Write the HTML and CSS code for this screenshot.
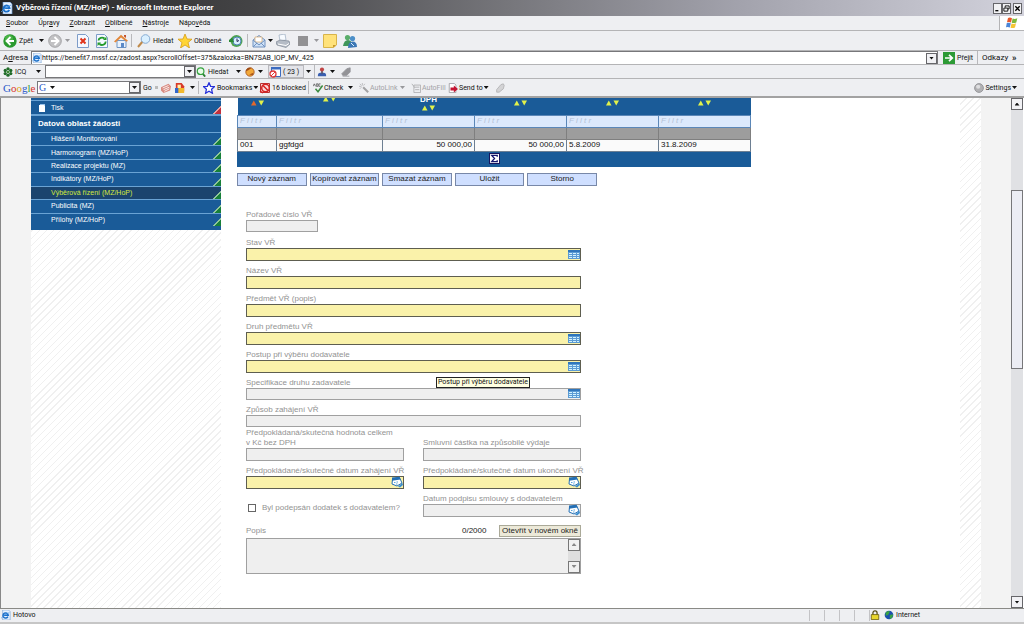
FILE: index.html
```html
<!DOCTYPE html>
<html lang="cs">
<head>
<meta charset="utf-8">
<title>Výběrová řízení (MZ/HoP)</title>
<link rel="stylesheet" href="styles.css">
</head>
<body>
<svg class="defs" aria-hidden="true">
  <symbol id="ie" viewBox="0 0 12 12"><path d="M2 0h7l2 2v10H2z" fill="#e8f2ff" stroke="#6b9bd2" stroke-width=".7"/><path d="M8.3 8a3.1 3.1 0 1 1 .3-1.8H3" fill="none" stroke="#1b6fc8" stroke-width="1.8"/><path d="M0 10Q3 6 10 3" fill="none" stroke="#4b9be8" stroke-width=".8"/></symbol>
  <symbol id="grid" viewBox="0 0 12 9"><path d="M0 0h12v9H0z" fill="#5b9bd4"/><path d="M0 0h12v2H0z" fill="#2f76bc"/><path d="M1 3h3v1H1zM5 3h3v1H5zM9 3h2v1H9zM1 5h3v1H1zM5 5h3v1H5zM9 5h2v1H9zM1 7h3v1H1zM5 7h3v1H5zM9 7h2v1H9z" fill="#d2f2ff"/></symbol>
  <symbol id="cal" viewBox="0 0 12 12"><path d="M1.500 3l7-1.500 2.500 5.500-5 3-5-2z" fill="#fff" stroke="#2672b8"/><path d="M1 1.500l7.500-.8 1 2.800-8.500 1.200z" fill="#236fb5"/><path d="M3 6.500h1.500M5.500 6H7M5 8h1.500" stroke="#5ba5dc"/><path d="M7 10.500L11.500 7l.5 2-3 2.500z" fill="#3d8fd0"/></symbol>
  <symbol id="sort" viewBox="0 0 13 6"><path d="M0 5.5L2.8.5l2.7 5z" class="up"/><path d="M7.500.5H13l-2.800 5z" fill="#e2f24a"/></symbol>
</svg>
<div class="window">
  <header class="titlebar">
    <svg class="i12"><use href="#ie"/></svg>
    <h1>Výběrová řízení (MZ/HoP) - Microsoft Internet Explorer</h1>
    <div class="winbtns">
      <button aria-label="Minimalizovat"><svg viewBox="0 0 8 8"><path d="M1.500 6.500h3.500" stroke="#000" stroke-width="1.500"/></svg></button>
      <button aria-label="Obnovit"><svg viewBox="0 0 8 8"><path d="M2.500 3V1h4.500v3.500H5.500M1 3.500h4.500v3.500H1z" fill="none" stroke="#000"/></svg></button>
      <button class="close" aria-label="Zavřít"><svg viewBox="0 0 8 8"><path d="M1.500 1.500l5 5m0-5l-5 5" stroke="#000" stroke-width="1.500"/></svg></button>
    </div>
  </header>

  <nav class="bar menu">
    <button><u>S</u>oubor</button><button>Úpr<u>a</u>vy</button><button><u>Z</u>obrazit</button><button><u>O</u>blíbené</button><button><u>N</u>ástroje</button><button>Nápo<u>v</u>ěda</button>
    <span class="flag"><svg viewBox="0 0 12 12"><path d="M2 1q2-1 4 .3L5 5.500Q3 4.500 1 5.300z" fill="#e8572a"/><path d="M6.600 1.600Q9 2.500 11.300 1.300L10.300 5.500Q8 6.500 5.700 5.800z" fill="#7db83c"/><path d="M.8 6Q3 5.200 4.800 6.300L3.800 10.500Q2 9.500 0 10.300z" fill="#4a86d8"/><path d="M5.500 6.600Q8 7.400 10 6.300L9 10.600Q7 11.500 4.500 10.800z" fill="#f5c433"/></svg></span>
  </nav>

  <div class="bar tools">
    <button><svg class="i14" viewBox="0 0 14 14"><circle cx="7" cy="7" r="6.700" fill="#2b9a2f"/><circle cx="6" cy="5" r="4" fill="#5cc455" opacity=".6"/><path d="M7.500 3L3.500 7l4 4M4 7h7" fill="none" stroke="#fff" stroke-width="1.800"/></svg>Zpět</button>
    <i class="caret"></i>
    <button aria-label="Vpřed"><svg class="i14" viewBox="0 0 14 14"><circle cx="7" cy="7" r="6.300" fill="#c2c2c4" stroke="#a5a5a8"/><path d="M6.500 3l4 4-4 4M10 7H3" fill="none" stroke="#fff" stroke-width="1.800"/></svg></button>
    <i class="caret off"></i>
    <button aria-label="Zastavit"><svg class="i14" viewBox="0 0 14 14"><path d="M1.500.500h8l3 3v10h-11z" fill="#f4f8ff" stroke="#7d9cc8"/><path d="M4.500 4.500l5 5m0-5l-5 5" stroke="#e0341b" stroke-width="2"/></svg></button>
    <button aria-label="Obnovit stránku"><svg class="i14" viewBox="0 0 14 14"><path d="M1.500.500h8l3 3v10h-11z" fill="#f4f8ff" stroke="#7d9cc8"/><path d="M3.500 6.500a3.500 3 0 0 1 6-2M10.500 7.500a3.500 3 0 0 1-6 2.500" fill="none" stroke="#239a2b" stroke-width="1.800"/><path d="M8 6l3.500 0V2.500zM6 8.500H2.500V12z" fill="#239a2b"/></svg></button>
    <button aria-label="Domů"><svg class="i14" viewBox="0 0 14 14"><path d="M3 6.500h9v7H3z" fill="#eaf2fc" stroke="#6f95c4"/><path d="M0 7.500L7 .8l7 6-1.500 1L7 3.500 1.500 8.500z" fill="#e2873a"/><path d="M10 1h2v3l-2-1.500z" fill="#c4502a"/><path d="M7 9h3v4.500H7z" fill="#5a89c8"/></svg></button>
    <i class="sep"></i>
    <button><svg class="i14" viewBox="0 0 14 14"><path d="M1 13l5-6" stroke="#c08a4a" stroke-width="2"/><circle cx="8.500" cy="5" r="4.300" fill="#d9efff" stroke="#86abd3"/></svg>Hledat</button>
    <button><svg class="i14" viewBox="0 0 14 14"><path d="M7 0l2 5 5 .2-4 3.400L11.500 14 7 11l-4.500 3L4 8.600 0 5.200 5 5z" fill="#ffd536" stroke="#d79c16" stroke-width=".8"/></svg>Oblíbené</button>
    <button aria-label="Historie"><svg class="i14" viewBox="0 0 14 14"><circle cx="7.500" cy="7" r="6" fill="#4ea452"/><circle cx="8" cy="7" r="4" fill="#d8effc" stroke="#4c82b8"/><path d="M8 4.500V7.500l2-1" fill="none" stroke="#225"/><path d="M0 6l3-2.500L5 8H0z" fill="#2b8a36"/></svg></button>
    <i class="sep"></i>
    <button aria-label="Pošta"><svg class="i14" viewBox="0 0 14 14"><path d="M1 6l6-4.500L13 6v7H1z" fill="#cfe2f8" stroke="#7192c0"/><path d="M3 3h7v5H3z" fill="#fff" stroke="#d4a86a" stroke-width=".7"/><path d="M1 6l6 5 6-5M1 13l4-4M13 13L9 9" fill="none" stroke="#7192c0"/></svg></button>
    <i class="caret"></i>
    <button aria-label="Tisk"><svg class="i14" viewBox="0 0 14 14"><path d="M4 7L3 1l6-1 1 6z" fill="#f7fbff" stroke="#9aaabf" stroke-width=".7"/><path d="M0 8l4-2 9 1 1 3-4 3.500L1 11z" fill="#b5bcc6" stroke="#7d8693" stroke-width=".7"/><path d="M2 10l8 1.500 3-2" stroke="#fff" fill="none"/></svg></button>
    <button aria-label="Upravit" disabled><svg class="i14" viewBox="0 0 14 14"><path d="M1 2h10v10H1z" fill="#929294"/></svg></button>
    <i class="caret off"></i>
    <button aria-label="Poznámka"><svg class="i14" viewBox="0 0 14 14"><path d="M.5.500h13V11l-3 2.500H.5z" fill="#ffe27a" stroke="#d8b44a"/><path d="M13 11h-3v2.500z" fill="#c99a2b"/></svg></button>
    <button aria-label="Messenger"><svg class="i14" viewBox="0 0 14 14"><circle cx="4.500" cy="3.500" r="2.600" fill="#59ad6a"/><path d="M0 12q1-6 5-6t4 6z" fill="#3f965a"/><circle cx="9.500" cy="4.500" r="2.600" fill="#4c8fc8"/><path d="M5 14q0-6.500 4.500-6.500T14 13z" fill="#3c77b5"/><path d="M8 9l3 3" stroke="#d8f0ff"/></svg></button>
  </div>

  <div class="bar address">
    <label for="url">A<u>d</u>resa</label>
    <div class="combo"><svg class="i10"><use href="#ie"/></svg><input id="url" value="https://benefit7.mssf.cz/zadost.aspx?scrollOffset=375&amp;zalozka=BN7SAB_IOP_MV_425"><button class="drop" aria-label="Rozbalit"><i class="caret"></i></button></div>
    <button class="go"><svg class="i12" viewBox="0 0 12 12"><path d="M0 0h12v12H0z" fill="#2c9a35"/><path d="M2 6h7M6 2.800L9.300 6 6 9.200" fill="none" stroke="#fff" stroke-width="1.700"/></svg>Přejít</button>
    <i class="sep"></i>
    <button class="big">Odkazy</button><b class="more">»</b>
  </div>

  <div class="bar icq">
    <button><svg class="i10" viewBox="0 0 12 12"><g fill="#1f6b28"><circle cx="6" cy="2.200" r="2"/><circle cx="9.300" cy="4.200" r="2"/><circle cx="9.300" cy="7.900" r="2"/><circle cx="6" cy="9.800" r="2"/><circle cx="2.700" cy="7.900" r="2"/><circle cx="2.700" cy="4.200" r="2"/></g><circle cx="6" cy="6" r="1.500" fill="#3c8a32"/></svg>ICQ</button>
    <i class="caret"></i>
    <div class="combo"><input aria-label="Hledat na ICQ"><button class="drop" aria-label="Rozbalit hledání"><i class="caret"></i></button></div>
    <button><svg class="i10" viewBox="0 0 12 12"><path d="M8 8l3 3.500" stroke="#2b7d33" stroke-width="2.200"/><circle cx="5.500" cy="5" r="4" fill="#e8fbe8" stroke="#35a23e" stroke-width="1.400"/></svg>Hledat</button>
    <i class="caret"></i>
    <button aria-label="Smajlík"><svg class="i10" viewBox="0 0 12 12"><circle cx="6" cy="6" r="5" fill="#f2a93a" stroke="#a8541c"/><path d="M1 5q1-5 7-4L4 4z" fill="#9c4a18"/><path d="M5 9l5-2v3z" fill="#a8541c"/></svg></button>
    <i class="caret"></i>
    <button class="count"><svg class="i12" viewBox="0 0 12 12"><path d="M2.500 1.500h9v9h-9z" fill="#fff" stroke="#3c6cc0"/><path d="M2 1h10v2.500H2z" fill="#3c6cc0"/><circle cx="4" cy="8" r="3" fill="#fff" stroke="#e03838" stroke-width="1.300"/><path d="M2 10l4-4" stroke="#e03838"/></svg>( 23 )</button>
    <i class="caret"></i>
    <i class="sep"></i>
    <button aria-label="Uživatel"><svg class="i10" viewBox="0 0 12 12"><path d="M1 11q0-4 3-4h4q3 0 3 4z" fill="#3a5fb0"/><path d="M5 4h2v4H5z" fill="#556"/><circle cx="6" cy="3" r="2.500" fill="#c04444"/></svg></button>
    <i class="caret"></i>
    <button aria-label="Zvýraznit" disabled><svg class="i10" viewBox="0 0 12 12"><path d="M1 8l6-6 4-1v5l-4 4H2zM2 11h8" fill="#939397" stroke="#939397"/></svg></button>
  </div>

  <div class="bar google">
    <a href="#" class="glogo"><b class="b">G</b><b class="r">o</b><b class="y">o</b><b class="b">g</b><b class="g">l</b><b class="r">e</b></a>
    <div class="combo"><span class="gmark">G</span><i class="caret"></i><input aria-label="Hledat na Google"><button class="drop" aria-label="Rozbalit historii"><i class="caret"></i></button></div>
    <button>Go</button>
    <i class="grip"></i>
    <button aria-label="Zprávy"><svg class="i10" viewBox="0 0 12 12"><path d="M0 5l9-4 3 3-1 5-8 3-3-3z" fill="#d98a80"/><path d="M2 6l7-3M3 8l7-3M4 10l6-3" stroke="#fff"/></svg></button>
    <button aria-label="Galerie"><svg class="i10" viewBox="0 0 12 12"><path d="M1 0h7l3 4v6H1z" fill="#d83a2b"/><path d="M0 6h5v6H0z" fill="#3166cc"/><path d="M4 6h7v6H4z" fill="#f3b92c"/><path d="M3 2h4v4H3z" fill="#fff1b0"/></svg></button>
    <i class="caret"></i>
    <i class="sep"></i>
    <button aria-label="Přidat záložku"><svg class="i12" viewBox="0 0 12 12"><path d="M6 .8l1.600 3.500 3.900.4-2.900 2.600.8 3.900L6 9.200l-3.400 2 .8-3.900L.5 4.700l3.900-.4z" fill="#fff" stroke="#2530d8" stroke-width="1.300"/></svg></button>
    <button>Bookmarks<i class="caret"></i></button>
    <button><svg class="i12" viewBox="0 0 12 12"><path d="M1.500 1.500h9v9h-9z" fill="#fbdada" stroke="#b83232"/><circle cx="6.500" cy="6" r="3.800" fill="none" stroke="#d62323" stroke-width="1.500"/><path d="M4 3.500l5 5M1 9l3 2" stroke="#d62323" stroke-width="1.500"/></svg>16 blocked</button>
    <i class="sep"></i>
    <button><svg class="i10" viewBox="0 0 12 12"><path d="M3 7l3 3.500L11.500 3" fill="none" stroke="#3a8a3f" stroke-width="1.800"/><path d="M0 4l1.500-3L3 4M4 1v3h2V1zM9 1H7v3h2" fill="none" stroke="#444" stroke-width=".8"/></svg>Check</button>
    <i class="caret"></i>
    <button disabled><svg class="i10" viewBox="0 0 12 12"><path d="M5 5l6 6" stroke="#a2a2a4" stroke-width="2.500"/><path d="M4 0v3M0 4h3M1 1l2 2M7 1L5.500 3M1 7l2-2" stroke="#b5b5b8"/></svg>AutoLink</button>
    <i class="caret off"></i>
    <button disabled><svg class="i10" viewBox="0 0 12 12"><path d="M3.500 2.500h8v9h-8zM5 5h5M5 8h5M1 1l4 5" fill="none" stroke="#ababad"/></svg>AutoFill</button>
    <button><svg class="i10" viewBox="0 0 12 12"><path d="M1.500.500h6l2 2v9h-8z" fill="#fff" stroke="#9a9aa0"/><path d="M3 5.500h4V3l5 4.300-5 4.200V9H3z" fill="#c41432"/></svg>Send to<i class="caret"></i></button>
    <button aria-label="Zvýrazňovač" disabled><svg class="i10" viewBox="0 0 12 12"><path d="M2 8l5-6 3-1 1 2-1 4-5 4H2z" fill="#d3d3d5" stroke="#b0b0b2"/></svg></button>
    <button class="settings"><svg class="i10" viewBox="0 0 12 12"><circle cx="6" cy="6" r="5.300" fill="#b1b1b4" stroke="#8e8e91"/><circle cx="5" cy="4.500" r="2.500" fill="#dedee0"/></svg>Settings<i class="caret"></i></button>
  </div>

  <div class="viewport">
    <div class="gutter"></div>
    <aside class="side hatch">
      <nav class="tree">
        <a href="#" class="print"><svg class="i8" viewBox="0 0 8 8"><path d="M2 0h5v6H2z" fill="#9cc4ea"/><path d="M1 1h5l1 1v6H1z" fill="#fff"/></svg>Tisk</a>
        <h2>Datová oblast žádosti</h2>
        <ul>
          <li><a href="#">Hlášení Monitorování</a></li>
          <li><a href="#">Harmonogram (MZ/HoP)</a></li>
          <li><a href="#">Realizace projektu (MZ)</a></li>
          <li><a href="#">Indikátory (MZ/HoP)</a></li>
          <li><a href="#" class="current">Výběrová řízení (MZ/HoP)</a></li>
          <li><a href="#">Publicita (MZ)</a></li>
          <li><a href="#">Přílohy (MZ/HoP)</a></li>
        </ul>
      </nav>
    </aside>
    <main>
      <table>
        <colgroup><col class="c-no"><col class="c-name"><col class="c-val"><col class="c-val"><col class="c-val"><col class="c-val"></colgroup>
        <thead>
          <tr>
            <th class="mid"><svg class="sort hot"><use href="#sort"/></svg></th>
            <th class="top"><svg class="sort"><use href="#sort"/></svg></th>
            <th class="low">DPH<svg class="sort"><use href="#sort"/></svg></th>
            <th class="mid"><svg class="sort"><use href="#sort"/></svg></th>
            <th class="mid"><svg class="sort"><use href="#sort"/></svg></th>
            <th class="mid"><svg class="sort"><use href="#sort"/></svg></th>
          </tr>
          <tr class="filter">
            <td><input aria-label="Filtr číslo" placeholder="F i l t r"></td><td><input aria-label="Filtr název" placeholder="F i l t r"></td><td><input aria-label="Filtr bez DPH" placeholder="F i l t r"></td><td><input aria-label="Filtr částka" placeholder="F i l t r"></td><td><input aria-label="Filtr od" placeholder="F i l t r"></td><td><input aria-label="Filtr do" placeholder="F i l t r"></td>
          </tr>
        </thead>
        <tbody>
          <tr class="blank"><td></td><td></td><td></td><td></td><td></td><td></td></tr>
          <tr class="data"><td>001</td><td>ggfdgd</td><td class="num">50 000,00</td><td class="num">50 000,00</td><td>5.8.2009</td><td>31.8.2009</td></tr>
        </tbody>
        <tfoot><tr><td colspan="6"><button class="sum" aria-label="Součet"><svg viewBox="0 0 10 10"><path d="M8 3V1.500H2L5 5 2 8.500h6V7" fill="none" stroke="#14146e" stroke-width="1.500"/></svg></button></td></tr></tfoot>
      </table>

      <div class="actions"><button>Nový záznam</button><button>Kopírovat záznam</button><button>Smazat záznam</button><button>Uložit</button><button>Storno</button></div>

      <form>
        <div class="fields">
          <div class="field short"><label for="f1">Pořadové číslo VŘ</label><div class="box"><input id="f1"></div></div>
          <div class="field"><label for="f2">Stav VŘ</label><div class="box req"><input id="f2"><svg class="pick"><use href="#grid"/></svg></div></div>
          <div class="field"><label for="f3">Název VŘ</label><div class="box req"><input id="f3"></div></div>
          <div class="field"><label for="f4">Předmět VŘ (popis)</label><div class="box req"><input id="f4"></div></div>
          <div class="field"><label for="f5">Druh předmětu VŘ</label><div class="box req"><input id="f5"><svg class="pick"><use href="#grid"/></svg></div></div>
          <div class="field"><label for="f6">Postup při výběru dodavatele</label><div class="box req"><input id="f6"><svg class="pick"><use href="#grid"/></svg></div><span class="tip" role="tooltip">Postup při výběru dodavatele</span></div>
          <div class="field"><label for="f7">Specifikace druhu zadavatele</label><div class="box"><input id="f7"><svg class="pick"><use href="#grid"/></svg></div></div>
          <div class="field"><label for="f8">Způsob zahájení VŘ</label><div class="box"><input id="f8"></div></div>
        </div>
        <div class="pairs">
          <div class="field"><label for="g1">Předpokládaná/skutečná hodnota celkem<br>v Kč bez DPH</label><div class="box"><input id="g1"></div></div>
          <div class="field"><label for="g2">Smluvní částka na způsobilé výdaje</label><div class="box"><input id="g2"></div></div>
          <div class="field"><label for="g3">Předpokládané/skutečné datum zahájení VŘ</label><div class="box req"><input id="g3"><svg class="i12"><use href="#cal"/></svg></div></div>
          <div class="field"><label for="g4">Předpokládané/skutečné datum ukončení VŘ</label><div class="box req"><input id="g4"><svg class="i12"><use href="#cal"/></svg></div></div>
          <div class="check"><input type="checkbox" id="g5"><label for="g5">Byl podepsán dodatek s dodavatelem?</label></div>
          <div class="field"><label for="g6">Datum podpisu smlouvy s dodavatelem</label><div class="box"><input id="g6"><svg class="i12"><use href="#cal"/></svg></div></div>
        </div>
        <div class="desc-head"><label for="desc">Popis</label><span>0/2000</span><button type="button">Otevřít v novém okně</button></div>
        <div class="desc"><textarea id="desc"></textarea><div class="mini"><button type="button" aria-label="Nahoru"><i class="caret up"></i></button><button type="button" aria-label="Dolů"><i class="caret"></i></button></div></div>
      </form>
    </main>
    <div class="edge hatch"></div>
    <div class="gutter"></div>
    <div class="scroll"><button aria-label="Posunout nahoru"><i class="caret up"></i></button><div class="track"><div class="thumb"></div></div><button aria-label="Posunout dolů"><i class="caret"></i></button></div>
  </div>

  <footer class="status">
    <span class="msg"><svg class="i10"><use href="#ie"/></svg>Hotovo</span>
    <i></i><i></i><i></i><i></i>
    <span class="lock"><svg class="i10" viewBox="0 0 12 12"><path d="M3.500 6V3.500a2.500 2.500 0 0 1 5 0V6" fill="none" stroke="#554b10" stroke-width="1.500"/><path d="M1.500 5.500h9v6h-9z" fill="#e8d62c" stroke="#6b5f10"/></svg></span>
    <span class="zone"><svg class="i10" viewBox="0 0 12 12"><circle cx="6" cy="6" r="5.200" fill="#1c4fb0"/><path d="M2 3q3-3 5-1L5 6 2 7zM7 6l4-1-1 4-3 2z" fill="#3aa344"/></svg>Internet</span>
  </footer>
</div>
</body>
</html>
```
FILE: styles.css
```css
* { box-sizing: border-box; }
body { margin: 0; font: 7px/10px Roboto, "DejaVu Sans", sans-serif; color: #111; background: #ecedf1; }
button, input, textarea { font: inherit; color: inherit; margin: 0; padding: 0; border: 0; background: none; border-radius: 0; outline: 0; min-width: 0; }
button { white-space: nowrap; }
button:disabled { color: #a3a3a6; }
h1, h2, ul { margin: 0; padding: 0; list-style: none; }
a { color: inherit; text-decoration: none; }
svg { display: block; flex: none; }
.defs { position: absolute; width: 0; height: 0; }
.i14 { width: 14px; height: 14px; }
.i12 { width: 12px; height: 12px; }
.i10 { width: 10px; height: 10px; }
.i8 { width: 8px; height: 8px; }

.window { display: flex; flex-direction: column; height: 100vh; }

.titlebar { display: flex; align-items: center; gap: 3px; height: 16px; flex: none; padding: 0 2px 0 1px; background: linear-gradient(90deg, #262626, #444446 25%, #77777c 50%, #a2a2ac 72%, #d2d2dc); }
.titlebar h1 { flex: 1; font-size: 8px; line-height: 12px; color: #fff; }
.winbtns { display: flex; }
.winbtns button { width: 9px; height: 11px; padding: 1px 0; background: #f2f2f4; border: 1px solid #66666a; }
.winbtns .close { margin-left: 2px; }
.winbtns svg { width: 7px; height: 7px; }

.bar { flex: none; align-items: center; padding-left: 3px; border-bottom: 1px solid #b4b4b6; background: #eeeff2; }
.bar button { display: flex; align-items: center; gap: 2px; text-align: left; }
.caret { display: block; flex: none; width: 5px; height: 3px; background: #111; clip-path: polygon(0 0, 100% 0, 50% 100%); }
.caret.up { clip-path: polygon(0 100%, 100% 100%, 50% 0); }
.caret.off { background: #98989b; }
.sep { width: 1px; height: 13px; background: #b8b8bb; }
.grip { width: 3px; height: 3px; background: #bbb; }

.menu { display: flex; gap: 10px; height: 15px; padding-left: 6px; }
.bar.menu button { display: block; }
.flag { margin-left: auto; width: 25px; height: 14px; padding: 1px 6px; background: #fff; border-left: 1px solid #b4b4b6; }
.flag svg { width: 12px; height: 12px; }

.tools { display: grid; height: 20px; grid-template-columns: 36px 9px 17px 11px 19px 19px 17px 6px 41px 51px 18px 5px 16px 8px 21px 17px 9px 20px 1fr; }

.combo { display: flex; align-items: center; height: 13px; min-width: 0; background: #fff; border: 1px solid #77777a; }
.combo input { flex: 1; height: 11px; }
.combo .drop { width: 11px; height: 11px; justify-content: center; background: #f1f1f4; border: 1px solid #66666a; }
.address { display: grid; height: 14px; grid-template-columns: 28px 1fr 5px 34px 5px 28px 14px; }
.address label, .address .big { font-size: 8px; }
.address .combo { border-bottom: 0; }
.address .go { grid-column: 4; }
.more { font-size: 9px; padding-left: 2px; }

.icq { display: grid; height: 14px; grid-template-columns: 33px 9px 151px 40px 9px 13px 10px 38px 8px 3px 13px 11px 1fr; }
.icq .count { width: 36px; height: 13px; background: #e3e4e9; border: 1px solid #b9b9be; }

.google { display: grid; height: 19px; border-bottom: 2px solid #a2a2a2; grid-template-columns: 34px 106px 12px 6px 14px 15px 8px 5px 14px 42px 49px 5px 35px 11px 41px 11px 37px 47px 12px 1fr; }
.google button { gap: 1px; }
.glogo { font: 11px/14px "Liberation Serif", serif; }
.glogo b { font-weight: normal; }
.glogo .b { color: #2a56c8; } .glogo .r { color: #d8322b; } .glogo .y { color: #e0a812; } .glogo .g { color: #2b9a3a; }
.google .combo { width: 104px; }
.gmark { width: 12px; padding-left: 1px; font: 10px/11px "Liberation Serif", serif; color: #2a56c8; }
.google .settings { justify-self: end; padding-right: 7px; }

.viewport { flex: 1; min-height: 0; display: flex; overflow: hidden; background: #fff; border-left: 1px solid #888; border-bottom: 1px solid #8a8a86; }
.gutter { width: 30px; background: #f3f3f3; }
.hatch { background: repeating-linear-gradient(135deg, #fff 0 4px, #f0f0f0 4px 5px); }
.side { width: 190px; }
.edge { width: 21px; }
main { flex: 1; min-width: 0; padding-left: 16px; font: 8px/10px "Liberation Sans", sans-serif; }

.tree { padding-top: 2px; background: #1a5b98; color: #fff; font: 7px/10px "Liberation Sans", sans-serif; border-bottom: 4px solid #1a5b98; }
.tree a { display: flex; align-items: center; height: 100%; padding-left: 20px; border-top: 1px solid #6aa3d4; background: linear-gradient(135deg, transparent 50%, #8fc49b 50% 57%, #178038 57%) right bottom / 8px 8px no-repeat; }
.tree .print { height: 14px; gap: 5px; padding-left: 7px; background: linear-gradient(135deg, transparent 50%, #e8a0a0 50% 57%, #c22f3c 57%) right bottom / 8px 8px no-repeat; }
.tree h2 { padding: 3px 7px; font-size: 8px; line-height: 10px; border-top: 2px solid #6aa3d4; height: 18px; }
.tree ul { display: grid; grid-template-rows: repeat(7, 1fr); height: 94px; }
.tree .current { background-color: #1b446e; color: #d3ea3c; }

table { width: 513px; margin-top: -6px; border-collapse: collapse; table-layout: fixed; }
.c-no { width: 39px; } .c-name { width: 106px; } .c-val { width: 92px; }
th { height: 23px; padding: 0; vertical-align: top; background: #1a5b98; color: #fff; line-height: 8px; }
.sort { width: 13px; height: 6px; margin: 0 auto; fill: #e2f24a; }
.hot { fill: #e2682c; }
.top { padding-top: 4px; } .mid { padding-top: 8px; } .low { padding-top: 4px; }
.low .sort { margin-top: 1px; }
td { height: 12px; padding: 0 2px; border: 1px solid #6d7f92; line-height: 10px; }
.filter td { background: #dce9fc; border-color: #5b87b8; }
.filter input { display: block; width: 100%; height: 10px; font-style: italic; }
.filter input::placeholder { color: #b3c1d6; opacity: 1; }
.blank td { background: #9d9d9d; border-color: #7f7f7f; }
.data td { background: #fafafa; }
.num { text-align: right; }
tfoot td { height: 15px; background: #1a5b98; border-color: #1a5b98; }
.sum { display: block; width: 11px; height: 11px; margin: 0 auto; padding: 0; background: #fff; border: 1px solid #14145e; }
.sum svg { width: 9px; height: 9px; }

.actions { display: grid; grid-template-columns: repeat(5, 1fr); gap: 3px; width: 360px; margin-top: 6px; }
.actions button { height: 13px; background: #cfdfff; border: 1px solid #7888a8; color: #222; }

form { width: 335px; margin: 24px 0 0 9px; color: #929292; }
.fields { display: flex; flex-direction: column; gap: 5px; }
.field { position: relative; display: flex; flex-direction: column; justify-content: flex-end; }
.field label { white-space: nowrap; }
.box { display: flex; align-items: center; height: 12px; background: #efefef; border: 1px solid #a0a0a0; color: #222; }
.box.req { height: 13px; background: #faf2aa; border-color: #5e5e50; }
.box input { flex: 1; height: 10px; }
.short .box { width: 72px; margin-bottom: 1px; }
.pick { width: 12px; height: 9px; }
.tip { position: absolute; top: 27px; right: 51px; padding: 0 1px; background: #ffffe1; border: 1px solid #222; color: #111; font: 7px/9px Roboto, sans-serif; white-space: nowrap; }
.pairs { display: grid; grid-template-columns: repeat(2, minmax(0, 1fr)); gap: 5px 19px; margin-top: 1px; }
.pairs .box { height: 13px; }
.check { display: flex; align-items: center; gap: 6px; padding: 6px 0 0 2px; white-space: nowrap; }
.check input { appearance: none; width: 8px; height: 8px; border: 1px solid #666; background: #fff; }
.desc-head { display: grid; grid-template-columns: 1fr 37px 82px; align-items: center; margin-top: 8px; }
.desc-head span { color: #222; }
.desc-head button { height: 12px; background: #ece9d8; border: 1px solid #aaa998; color: #222; }
.desc { display: flex; height: 36px; margin-top: 1px; border: 1px solid #a0a0a0; background: #efefef; }
.desc textarea { flex: 1; resize: none; color: #222; }
.mini { display: flex; flex-direction: column; justify-content: space-between; width: 12px; background: #dfdfdf; }
.mini button { display: grid; place-items: center; height: 12px; background: #f1f1f1; border: 1px solid #777; }
.mini .caret { background: #888; }

.scroll { display: flex; flex-direction: column; width: 12px; margin-right: 1px; background: #e0e1e4; }
.scroll > button { display: grid; place-items: center; height: 12px; background: #f2f2f5; border: 1px solid #66666a; }
.track { flex: 1; padding-top: 80px; }
.thumb { height: 38%; min-height: 179px; background: #ecedf4; border: 1px solid #77777a; }

.status { flex: none; display: grid; grid-template-columns: 1fr repeat(4, 15px) 15px 140px; align-items: center; height: 15px; padding: 0 0 1px 1px; border-bottom: 2px solid #c6c6c6; background: #eeeff2; }
.status span { display: flex; align-items: center; gap: 2px; }
.status i, .status .lock { height: 11px; border-left: 1px solid #c3c3c6; }
```
